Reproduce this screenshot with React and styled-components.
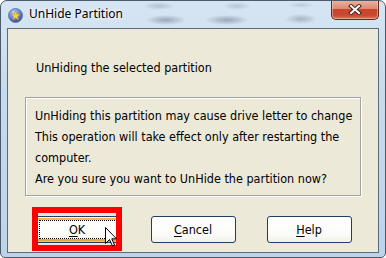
import React from "react";
import styled, { createGlobalStyle } from "styled-components";

const GlobalStyle = createGlobalStyle`
  html, body { margin: 0; padding: 0; background: #ffffff; }
  #root { width: 386px; height: 258px; }
`;

const Window = styled.div`
  box-sizing: border-box;
  width: 386px;
  height: 258px;
  display: flex;
  flex-direction: column;
  border: 1px solid #4b5b6c;
  border-radius: 7px 7px 5px 5px;
  padding: 0 6px 4px 6px;
  overflow: hidden;
  background:
    radial-gradient(ellipse 16px 4px at 158px 5px, rgba(110, 125, 145, 0.35), transparent),
    radial-gradient(ellipse 14px 4px at 236px 5px, rgba(110, 125, 145, 0.3), transparent),
    radial-gradient(ellipse 14px 3px at 300px 4px, rgba(110, 125, 145, 0.25), transparent),
    radial-gradient(ellipse 20px 5px at 165px 19px, rgba(80, 95, 115, 0.45), transparent),
    radial-gradient(ellipse 22px 5px at 226px 19px, rgba(80, 95, 115, 0.45), transparent),
    radial-gradient(ellipse 16px 5px at 300px 18px, rgba(80, 95, 115, 0.35), transparent),
    linear-gradient(180deg, #d6e5f3 0%, #c7dbee 35%, #bdd3ea 100%);
`;

const TitleBar = styled.div`
  display: flex;
  align-items: flex-start;
  height: 27px;
  padding-left: 1px;
  flex: none;
`;

const AppIcon = styled.svg`
  margin-top: 7px;
  width: 15px;
  height: 15px;
  flex: none;
`;

const Title = styled.div`
  margin-top: 5px;
  margin-left: 6px;
  font-family: "Noto Sans", "Open Sans", sans-serif;
  font-size: 12px;
  line-height: 16px;
  color: #000;
  text-shadow: 0 0 6px rgba(255, 255, 255, 0.95), 0 0 3px rgba(255, 255, 255, 0.9);
`;

const CloseButton = styled.div`
  box-sizing: border-box;
  margin-left: auto;
  margin-top: -1px;
  width: 48px;
  height: 20px;
  border: 1px solid #5e2b22;
  border-top: none;
  border-radius: 0 0 5px 5px;
  display: flex;
  align-items: center;
  justify-content: center;
  background: linear-gradient(
    180deg,
    #eab4a6 0%,
    #de8a74 45%,
    #c9452c 50%,
    #c84a31 80%,
    #d9755b 100%
  );
  box-shadow: inset 0 0 0 1px rgba(255, 220, 210, 0.45);
`;

const Client = styled.div`
  flex: 1;
  display: flex;
  flex-direction: column;
  border: 1px solid #5c6b7c;
  background: #ece9d8;
  font-family: "DejaVu Sans Condensed", "DejaVu Sans", sans-serif;
  font-stretch: condensed;
  font-size: 12.5px;
  color: #000;
`;

const Heading = styled.div`
  margin: 28px 0 0 28px;
  line-height: 21px;
`;

const GroupBox = styled.div`
  margin: 19px 17px 0 17px;
  padding: 7px 8px 6px 9px;
  border: 1px solid #a3a3a0;
  box-shadow: 1px 1px 0 #ffffff, inset 1px 1px 0 #ffffff;
`;

const Line = styled.div`
  line-height: 21px;
  white-space: nowrap;
`;

const ButtonRow = styled.div`
  margin-top: 20px;
  display: flex;
  justify-content: center;
  gap: 31px;
`;

const ButtonSlot = styled.div`
  position: relative;
`;

const Button = styled.div`
  box-sizing: border-box;
  position: relative;
  width: 85px;
  height: 27px;
  border: 1px solid #1f3f66;
  border-radius: 3px;
  background: linear-gradient(180deg, #ffffff 0%, #fbfbf9 70%, #f1f0ea 100%);
  display: flex;
  align-items: center;
  justify-content: center;
  line-height: 16px;
  padding-top: 1px;
  ${(p) =>
    p.$hot &&
    `
    box-shadow:
      inset 0 1px 0 #fff4dc,
      inset 0 3px 0 #f5b84a,
      inset 0 -1px 0 #f7c26a,
      inset 0 -3px 0 #e8a43a;
    &::after {
      content: "";
      position: absolute;
      top: 3px;
      left: 3px;
      right: 2px;
      bottom: 3px;
      border: 1px dotted #000;
    }
  `}
`;

const Mnemonic = styled.span`
  text-decoration: underline;
  text-underline-offset: 2px;
`;

const Highlight = styled.div`
  position: absolute;
  top: -9px;
  left: -3px;
  right: -2px;
  bottom: -8px;
  border: 6px solid #ff0000;
  pointer-events: none;
`;

const Cursor = styled.svg`
  position: absolute;
  left: 70px;
  top: 11px;
  width: 13px;
  height: 20px;
`;

function StarIcon() {
  return (
    <AppIcon viewBox="0 0 15 15">
      <defs>
        <radialGradient id="disc" cx="40%" cy="30%" r="75%">
          <stop offset="0%" stopColor="#c9d8f7" />
          <stop offset="45%" stopColor="#6f8fd9" />
          <stop offset="100%" stopColor="#2d4597" />
        </radialGradient>
      </defs>
      <circle cx="7.5" cy="7.5" r="7" fill="url(#disc)" stroke="#5a6fa8" strokeWidth="0.8" />
      <path
        d="M7.6 2.6 L8.9 6.1 L12.5 6.2 L9.7 8.4 L10.7 12 L7.6 9.9 L4.6 12 L5.6 8.4 L2.8 6.2 L6.4 6.1 Z"
        fill="#f7d23a"
        stroke="#b8860b"
        strokeWidth="0.5"
      />
    </AppIcon>
  );
}

function CloseGlyph() {
  return (
    <svg width="14" height="11" viewBox="0 0 14 11">
      <path d="M3 2 L11 9 M11 2 L3 9" stroke="#4a2019" strokeWidth="4" strokeLinecap="square" />
      <path d="M3 2 L11 9 M11 2 L3 9" stroke="#ffffff" strokeWidth="2" strokeLinecap="square" />
    </svg>
  );
}

function Pointer() {
  return (
    <Cursor viewBox="0 0 13 20">
      <path
        d="M0.5 0.5 L0.5 16.5 L4.5 12.5 L7.5 19 L9.5 18 L6.8 11.8 L11.5 11.8 Z"
        fill="#ffffff"
        stroke="#000000"
        strokeWidth="1"
        strokeLinejoin="miter"
      />
    </Cursor>
  );
}

export default function App() {
  return (
    <>
      <GlobalStyle />
      <Window>
        <TitleBar>
          <StarIcon />
          <Title>UnHide Partition</Title>
          <CloseButton>
            <CloseGlyph />
          </CloseButton>
        </TitleBar>
        <Client>
          <Heading>UnHiding the selected partition</Heading>
          <GroupBox>
            <Line>UnHiding this partition may cause drive letter to change</Line>
            <Line>This operation will take effect only after restarting the</Line>
            <Line>computer.</Line>
            <Line>Are you sure you want to UnHide the partition now?</Line>
          </GroupBox>
          <ButtonRow>
            <ButtonSlot>
              <Button $hot>
                <span>
                  <Mnemonic>O</Mnemonic>K
                </span>
              </Button>
              <Highlight />
              <Pointer />
            </ButtonSlot>
            <ButtonSlot>
              <Button>
                <span>
                  <Mnemonic>C</Mnemonic>ancel
                </span>
              </Button>
            </ButtonSlot>
            <ButtonSlot>
              <Button>
                <span>
                  <Mnemonic>H</Mnemonic>elp
                </span>
              </Button>
            </ButtonSlot>
          </ButtonRow>
        </Client>
      </Window>
    </>
  );
}
